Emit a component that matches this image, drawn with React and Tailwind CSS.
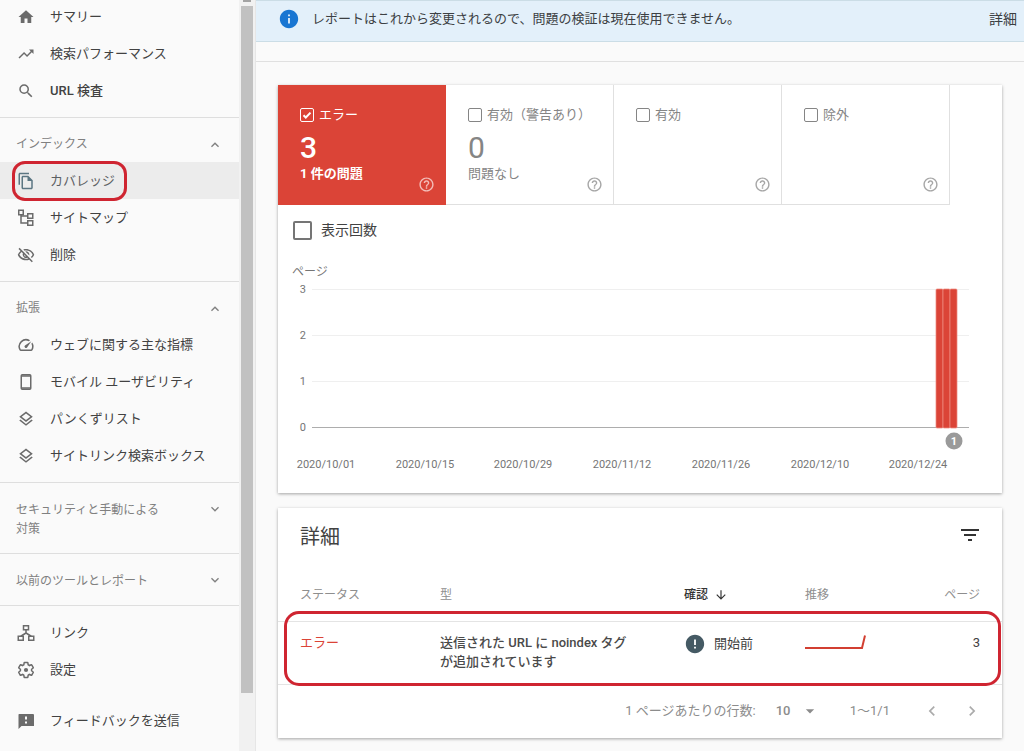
// Index Coverage Report Page
import { useState } from 'react';
import {
  MdArrowDownward,
  MdArrowDropDown,
  MdError,
  MdFilterList,
  MdHelpOutline,
  MdHome,
  MdInfo,
  MdKeyboardArrowDown,
  MdKeyboardArrowUp,
  MdChevronLeft,
  MdChevronRight,
  MdOutlineFileCopy,
  MdOutlineLayers,
  MdOutlineSpeed,
  MdOutlineVisibilityOff,
  MdSearch,
  MdTrendingUp,
} from 'react-icons/md';

function SitemapIcon({ className }) {
  return (
    <svg viewBox="0 0 18 18" className={className} fill="none" stroke="currentColor" strokeWidth="1.5" aria-hidden="true">
      <rect x="1.75" y="1.25" width="4.5" height="4.5" />
      <rect x="10.75" y="4.75" width="5" height="4.5" />
      <rect x="10.75" y="11.75" width="5" height="4.5" />
      <path d="M4 5.75v8.25h6.75M4 7h6.75" />
    </svg>
  );
}

function LinksIcon({ className }) {
  return (
    <svg viewBox="0 0 18 18" className={className} fill="none" stroke="currentColor" strokeWidth="1.5" aria-hidden="true">
      <rect x="6.5" y="1.75" width="5" height="4" />
      <rect x="1.25" y="12.25" width="5" height="4" />
      <rect x="11.75" y="12.25" width="5" height="4" />
      <path d="M9 5.75v3.5M3.75 12.25L9 9l5.25 3.25" />
    </svg>
  );
}

function PhoneIcon({ className }) {
  return (
    <svg viewBox="0 0 18 18" className={className} fill="none" stroke="currentColor" aria-hidden="true">
      <rect x="4.25" y="1.75" width="9.5" height="14.5" rx="1" strokeWidth="1.5" />
      <path d="M4 3h10M4 15h10" strokeWidth="1.5" />
    </svg>
  );
}

function GearIcon({ className }) {
  return (
    <svg viewBox="0 0 24 24" className={className} fill="none" stroke="currentColor" aria-hidden="true">
      <path
        strokeWidth="2"
        d="M19.43 12.98c.04-.32.07-.64.07-.98s-.03-.66-.07-.98l2.11-1.65c.19-.15.24-.42.12-.64l-2-3.46c-.12-.22-.39-.3-.61-.22l-2.49 1c-.52-.4-1.08-.73-1.69-.98l-.38-2.65C14.46 2.18 14.25 2 14 2h-4c-.25 0-.46.18-.49.42l-.38 2.65c-.61.25-1.17.59-1.69.98l-2.49-1c-.23-.09-.49 0-.61.22l-2 3.46c-.13.22-.07.49.12.64l2.11 1.65c-.04.32-.07.65-.07.98s.03.66.07.98l-2.11 1.65c-.19.15-.24.42-.12.64l2 3.46c.12.22.39.3.61.22l2.49-1c.52.4 1.08.73 1.69.98l.38 2.65c.03.24.24.42.49.42h4c.25 0 .46-.18.49-.42l.38-2.65c.61-.25 1.17-.59 1.69-.98l2.49 1c.23.09.49 0 .61-.22l2-3.46c.12-.22.07-.49-.12-.64l-2.11-1.65z"
      />
      <circle cx="12" cy="12" r="2.8" fill="currentColor" stroke="none" />
    </svg>
  );
}

function FeedbackIcon({ className }) {
  return (
    <svg viewBox="0 0 18 18" className={className} aria-hidden="true">
      <path d="M2 2h14q1 0 1 1v11H4.5l-3 3V3q0-1 .5-1z" fill="currentColor" />
      <path d="M8 4.5h2v3H8zM8 9.5h2v2H8z" fill="#fafafa" />
    </svg>
  );
}

const mainItems = [
  { label: 'サマリー', icon: MdHome },
  { label: '検索パフォーマンス', icon: MdTrendingUp },
  { label: 'URL 検査', icon: MdSearch, medium: true },
];

const indexItems = [
  { label: 'カバレッジ', icon: MdOutlineFileCopy, active: true },
  { label: 'サイトマップ', icon: SitemapIcon },
  { label: '削除', icon: MdOutlineVisibilityOff },
];

const enhancementItems = [
  { label: 'ウェブに関する主な指標', icon: MdOutlineSpeed },
  { label: 'モバイル ユーザビリティ', icon: PhoneIcon },
  { label: 'パンくずリスト', icon: MdOutlineLayers },
  { label: 'サイトリンク検索ボックス', icon: MdOutlineLayers },
];

const tiles = [
  { id: 'error', label: 'エラー', count: 3, note: '1 件の問題' },
  { id: 'warning', label: '有効（警告あり）', count: 0, note: '問題なし' },
  { id: 'valid', label: '有効' },
  { id: 'excluded', label: '除外' },
];

const dates = [
  { label: '2020/10/01', x: 48 },
  { label: '2020/10/15', x: 147 },
  { label: '2020/10/29', x: 245 },
  { label: '2020/11/12', x: 344 },
  { label: '2020/11/26', x: 443 },
  { label: '2020/12/10', x: 542 },
  { label: '2020/12/24', x: 640 },
];

function NavItem({ label, icon: Icon, active, medium }) {
  return (
    <a
      href="#"
      className={`relative flex h-[37px] items-center gap-[15px] px-[17px] ${medium ? 'font-medium' : ''} ${active ? 'bg-[#ececec] text-[#5c6063]' : 'text-[#424242]'}`}
    >
      <Icon className={`size-[18px] shrink-0 ${active ? 'text-[#5b7682]' : 'text-[#6b6b6b]'}`} />
      <span>{label}</span>
      {active && <span className="absolute -top-px left-3 h-10 w-[115px] rounded-[13px] border-3 border-[#cf2531]" />}
    </a>
  );
}

function NavGroup({ title, items }) {
  return (
    <section className="border-b border-[#dedede] pt-[7px] pb-2">
      <button type="button" className="flex h-[37px] w-full items-center justify-between px-4 pt-0.5 text-[12px] text-[#808080]">
        <span>{title}</span>
        <MdKeyboardArrowUp className="size-4" />
      </button>
      {items.map((item) => (
        <NavItem key={item.label} {...item} />
      ))}
    </section>
  );
}

function CollapsedGroup({ title }) {
  return (
    <button
      type="button"
      className="flex w-full items-start justify-between border-b border-[#dedede] px-4 pt-[18px] pb-[14px] text-left text-[12px] leading-[19px] text-[#808080]"
    >
      <span className="w-[150px]">{title}</span>
      <MdKeyboardArrowDown className="size-4" />
    </button>
  );
}

function Sidebar() {
  return (
    <aside className="flex w-[256px] shrink-0 border-r border-[#e6e6e6]">
      <nav className="-mt-0.5 w-[239px] text-[13px] leading-[19px]">
        <section className="border-b border-[#dedede] pb-2">
          {mainItems.map((item) => (
            <NavItem key={item.label} {...item} />
          ))}
        </section>
        <NavGroup title="インデックス" items={indexItems} />
        <NavGroup title="拡張" items={enhancementItems} />
        <CollapsedGroup title="セキュリティと手動による対策" />
        <CollapsedGroup title="以前のツールとレポート" />
        <section className="pt-2">
          <NavItem label="リンク" icon={LinksIcon} />
          <NavItem label="設定" icon={GearIcon} />
          <div className="pt-[14px]">
            <NavItem label="フィードバックを送信" icon={FeedbackIcon} />
          </div>
        </section>
      </nav>
      {/* scroll bar */}
      <div className="flex flex-1 flex-col bg-[#f1f1f1] pr-[2px] pl-[2px]">
        <div className="flex h-[6px] justify-center">
          <span className="h-[2px] w-2 bg-[#a3a3a3]" />
        </div>
        <div className="flex-[686] bg-[#c1c1c1]" />
        <div className="flex-[58]" />
      </div>
    </aside>
  );
}

function StatusTile({ tile, checked, onToggle }) {
  return (
    <div
      className={`flex h-[120px] w-[168px] flex-col border-r border-b px-[22px] pt-5 text-[13px] leading-[19px] ${checked ? 'border-[#db4437] bg-[#db4437] text-white' : 'border-[#e0e0e0] bg-white text-[#858585]'}`}
    >
      <label className="-mr-4 flex items-center gap-[5px] whitespace-nowrap">
        <span className="grid size-[14px] shrink-0 place-items-center">
          <input
            type="checkbox"
            checked={checked}
            onChange={onToggle}
            className="col-start-1 row-start-1 size-[14px] appearance-none rounded-[2px] border border-current"
          />
          {checked && (
            <svg viewBox="0 0 14 14" className="pointer-events-none col-start-1 row-start-1 size-[14px]" fill="none" stroke="currentColor" strokeWidth="2">
              <path d="M3.5 7.2l2.3 2.3 4.7-4.9" />
            </svg>
          )}
        </span>
        {tile.label}
      </label>
      <div className={`mt-2 h-8 text-[30px] leading-8 ${checked ? 'font-medium' : ''}`}>{tile.count}</div>
      <div className="flex justify-between">
        <span className={`h-[19px] ${checked ? 'font-bold' : ''}`}>{tile.note}</span>
        <button type="button" aria-label="ヘルプ" className={`-mr-3 pt-3 ${checked ? 'text-[#f3bdb8]' : 'text-[#a6a6a6]'}`}>
          <MdHelpOutline className="size-[17px]" />
        </button>
      </div>
    </div>
  );
}

function PagesChart() {
  return (
    <svg viewBox="0 0 724 218" className="block w-full text-[11px]" role="img" aria-label="ページ数の推移">
      <text x="14" y="14" fill="#757575" className="text-[12px]">ページ</text>
      {[3, 2, 1, 0].map((value, i) => (
        <g key={value}>
          <text x="28" y={31 + i * 46} textAnchor="end" fill="#757575">{value}</text>
          <rect x="34" y={27 + i * 46} width="657" height="1" fill={value === 0 ? '#adadad' : '#efefef'} />
        </g>
      ))}
      {[658, 665, 672].map((x) => (
        <rect key={x} x={x} y="27" width="7" height="139" rx="1" fill="#db4437" stroke="#ee8c82" strokeWidth="0.75" />
      ))}
      <circle cx="676" cy="179" r="8.5" fill="#9a9a9a" />
      <text x="676" y="183" textAnchor="middle" fill="#fff" className="font-bold">1</text>
      {dates.map((date) => (
        <text key={date.label} x={date.x} y="206" textAnchor="middle" fill="#757575">{date.label}</text>
      ))}
    </svg>
  );
}

function DetailsTable() {
  return (
    <table className="w-full table-fixed text-left text-[13px] leading-[19px] text-[#424242]">
      <thead>
        <tr className="h-[55px] border-b border-[#e4e4e4] text-[12px] text-[#8e8e8e]">
          <th className="w-[162px] pt-1 pl-[22px] font-normal">ステータス</th>
          <th className="w-[244px] pt-1 font-normal">型</th>
          <th className="w-[121px] pt-1 font-medium text-[#333333]">
            <span className="flex items-center gap-[6px]">
              確認 <MdArrowDownward className="size-[14px]" />
            </span>
          </th>
          <th className="w-[100px] pt-1 font-normal">推移</th>
          <th className="pt-1 pr-[22px] text-right font-normal">ページ</th>
        </tr>
      </thead>
      <tbody>
        <tr className="relative h-[63px] border-b border-[#e4e4e4] align-top">
          <td className="pt-[11px] pl-[22px] text-[#db4437]">
            エラー
            <span className="absolute -top-[10px] right-px -bottom-[3px] left-[6px] rounded-[15px] border-3 border-[#cf2531]" />
          </td>
          <td className="pt-[11px] pr-12 font-medium text-[#4a4a4a]">送信された URL に noindex タグが追加されています</td>
          <td className="pt-[11px]">
            <span className="flex items-center gap-2">
              <MdError className="size-[22px] text-[#455a64]" /> 開始前
            </span>
          </td>
          <td className="pt-[11px]">
            <svg viewBox="0 0 62 19" className="h-[19px] w-[62px]" fill="none" stroke="#d23f31" strokeWidth="2" aria-hidden="true">
              <path d="M0 15h57L60 2.5" />
            </svg>
          </td>
          <td className="pt-[11px] pr-[22px] text-right">3</td>
        </tr>
      </tbody>
    </table>
  );
}

export default function CoverageReportPage() {
  const [selected, setSelected] = useState(['error']);
  const [showImpressions, setShowImpressions] = useState(false);

  const toggle = (id) => {
    setSelected(selected.includes(id) ? selected.filter((s) => s !== id) : [...selected, id]);
  };

  return (
    <div className="flex min-h-screen bg-[#fafafa] font-[Roboto,'Noto_Sans_CJK_JP',sans-serif]">
      <Sidebar />
      <div className="min-w-0 flex-1">
        <div className="flex h-[42px] items-center border-t border-b border-[#cbdde6] bg-[#e3f0fa] pr-[7px] pb-1 pl-[22px] text-[13px] text-[#3c4043]">
          <MdInfo className="size-[22px] text-[#1976d2]" />
          <p className="ml-3 flex-1">レポートはこれから変更されるので、問題の検証は現在使用できません。</p>
          <a href="#" className="text-[14px]">詳細</a>
        </div>
        <div className="h-5 border-b border-[#e0e0e0]" />

        <main className="flex flex-col gap-[15px] px-[22px] pt-[23px] pb-3">
          <section className="bg-white pb-[13px] shadow-[0_1px_3px_rgba(0,0,0,0.35)]">
            <div className="flex">
              {tiles.map((tile) => (
                <StatusTile key={tile.id} tile={tile} checked={selected.includes(tile.id)} onToggle={() => toggle(tile.id)} />
              ))}
            </div>
            <label className="mb-[7px] flex h-[50px] items-center gap-[9px] pl-[15px] text-[14px] text-[#424242]">
              <input
                type="checkbox"
                checked={showImpressions}
                onChange={() => setShowImpressions(!showImpressions)}
                className="size-[19px] appearance-none rounded-[2px] border-2 border-[#757575] checked:bg-[#757575]"
              />
              表示回数
            </label>
            <PagesChart />
          </section>

          <section className="bg-white shadow-[0_1px_3px_rgba(0,0,0,0.35)]">
            <div className="flex h-[58px] items-center justify-between pr-5 pl-[22px]">
              <h2 className="text-[20px] text-[#424242]">詳細</h2>
              <button type="button" aria-label="フィルタ" className="pb-1">
                <MdFilterList className="size-6 text-[#333333]" />
              </button>
            </div>
            <DetailsTable />
            <div className="flex h-[53px] items-center justify-end pr-5 text-[13px] text-[#8c8c8c]">
              <label htmlFor="rows">1 ページあたりの行数:</label>
              <span className="ml-5 grid w-11 items-center">
                <select id="rows" className="col-start-1 row-start-1 appearance-none font-medium">
                  <option>10</option>
                </select>
                <MdArrowDropDown className="pointer-events-none col-start-1 row-start-1 size-5 justify-self-end" />
              </span>
              <span className="ml-[30px]">1〜1/1</span>
              <button type="button" aria-label="前へ" className="ml-8 text-[#ababab]">
                <MdChevronLeft className="size-5" />
              </button>
              <button type="button" aria-label="次へ" className="ml-5 text-[#ababab]">
                <MdChevronRight className="size-5" />
              </button>
            </div>
          </section>
        </main>
      </div>
    </div>
  );
}
